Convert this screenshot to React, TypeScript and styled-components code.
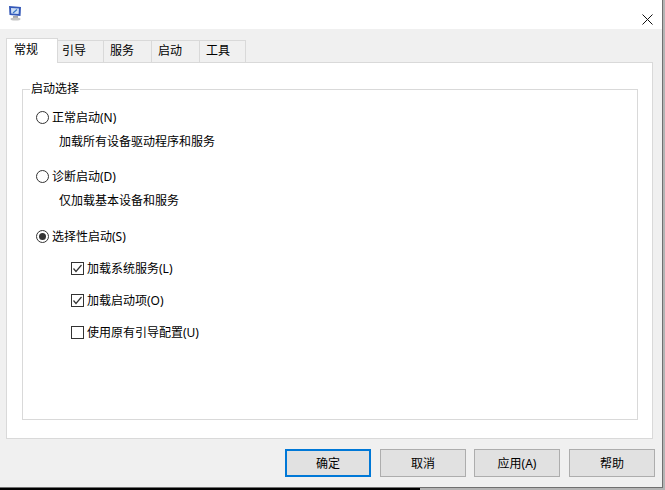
import React from 'react';
import styled, { createGlobalStyle } from 'styled-components';

const GlobalStyle = createGlobalStyle`
  html, body {
    margin: 0;
    padding: 0;
    background: #000;
  }
  body {
    width: 665px;
    height: 490px;
    overflow: hidden;
    font-family: "Noto Sans", "Noto Sans CJK SC", sans-serif;
  }
`;

const Screen = styled.div`
  width: 665px;
  height: 490px;
  background: linear-gradient(to right, #000 420px, #b4b4b4 420px);
  overflow: hidden;
`;

const Win = styled.div`
  width: 663px;
  height: 488px;
  background: #f0f0f0;
  border-right: 1px solid #707070;
  border-bottom: 1px solid #707070;
  display: flex;
  flex-direction: column;
  box-sizing: border-box;
`;

const TitleBar = styled.div`
  box-sizing: border-box;
  height: 29px;
  flex: none;
  background: #fff;
  display: flex;
  align-items: flex-start;
  justify-content: space-between;
  padding: 5px 9px 0 8px;
`;

const CloseWrap = styled.div`
  margin-top: 3px;
`;

const Body = styled.div`
  flex: 1;
  padding: 9px 0 0 6px;
  display: flex;
  flex-direction: column;
`;

const TabRow = styled.div`
  display: flex;
  height: 24px;
  flex: none;
  align-items: flex-end;
`;

const ActiveTab = styled.div`
  box-sizing: border-box;
  width: 52px;
  height: 25px;
  margin-bottom: -1px;
  padding-left: 7px;
  background: #fff;
  border: 1px solid #d9d9d9;
  border-bottom: none;
  font-size: 12px;
  line-height: 22px;
  color: #000;
  position: relative;
  z-index: 1;
`;

const Tab = styled.div<{ $width: number; $pad: number }>`
  box-sizing: border-box;
  width: ${p => p.$width}px;
  height: 22px;
  padding-left: ${p => p.$pad}px;
  background: #f0f0f0;
  border-top: 1px solid #d9d9d9;
  border-right: 1px solid #d9d9d9;
  font-size: 12px;
  line-height: 19px;
  color: #000;
`;

const Sheet = styled.div`
  box-sizing: border-box;
  width: 647px;
  height: 377px;
  background: #fff;
  border: 1px solid #d9d9d9;
  padding: 17px 14px 0 15px;
`;

const Group = styled.fieldset`
  box-sizing: border-box;
  margin: 0;
  width: 100%;
  height: 340px;
  border: 1px solid #d9d9d9;
  padding: 0 0 0 13px;
  display: flex;
  flex-direction: column;
`;

const Legend = styled.legend`
  font-size: 12px;
  line-height: 18px;
  color: #000;
  padding: 0 1px;
  margin-left: -6px;
`;

const OptionRow = styled.div`
  display: flex;
  align-items: center;
  gap: 3px;
  height: 20px;
  font-size: 12px;
  color: #000;
`;

const FirstRow = styled(OptionRow)`
  margin-top: 9px;
`;

const Hint = styled.div<{ $after: number }>`
  font-size: 12px;
  color: #000;
  line-height: 20px;
  margin: 5px 0 ${p => p.$after}px 23px;
`;

const Checks = styled.div`
  display: flex;
  flex-direction: column;
  gap: 12px;
  margin: 12px 0 0 35px;
`;

const Footer = styled.div`
  display: flex;
  padding: 10px 0 0 279px;
`;

const Button = styled.button<{ $primary?: boolean; $gap?: number }>`
  box-sizing: border-box;
  width: 86px;
  height: 28px;
  margin: 0 ${p => p.$gap ?? 0}px 0 0;
  padding: 0;
  background: #e1e1e1;
  border: ${p => (p.$primary ? '2px solid #0078d7' : '1px solid #adadad')};
  font-family: inherit;
  font-size: 12px;
  color: #000;
`;

const Radio = ({ checked }: { checked?: boolean }) => (
  <svg width="13" height="13" viewBox="0 0 13 13">
    <circle cx="6.5" cy="6.5" r="6" fill="#fff" stroke="#333" />
    {checked && <circle cx="6.5" cy="6.5" r="3.5" fill="#333" />}
  </svg>
);

const Check = ({ checked }: { checked?: boolean }) => (
  <svg width="13" height="13" viewBox="0 0 13 13">
    <rect x="0.5" y="0.5" width="12" height="12" fill="#fff" stroke="#333" />
    {checked && <path d="M2.5 6.5 L5 9.5 L10.5 3" fill="none" stroke="#333" strokeWidth="1.2" />}
  </svg>
);

const AppIcon = () => (
  <svg width="14" height="16" viewBox="0 0 14 16">
    <path d="M1 1 L13 2 L12.5 11 L1.5 10 Z" fill="#3458b8" />
    <path d="M3 3 L11 3.6 L10.6 9 L3.2 8.4 Z" fill="#cfe0f5" />
    <path d="M5 8 L9 4.5" stroke="#3a78c8" strokeWidth="1.2" />
    <rect x="5" y="11" width="5" height="2" fill="#a8a8a8" />
    <ellipse cx="7.5" cy="14" rx="5" ry="1.5" fill="#c4c4c4" />
  </svg>
);

const CloseIcon = () => (
  <svg width="11" height="11" viewBox="0 0 11 11">
    <path d="M0.5 0.5 L10.5 10.5 M10.5 0.5 L0.5 10.5" stroke="#111" strokeWidth="1" />
  </svg>
);

const tabs = [
  { label: '引导', width: 46, pad: 4 },
  { label: '服务', width: 48, pad: 6 },
  { label: '启动', width: 48, pad: 6 },
  { label: '工具', width: 46, pad: 6 },
];

export default function App() {
  return (
    <Screen>
      <GlobalStyle />
      <Win>
        <TitleBar>
          <AppIcon />
          <CloseWrap>
            <CloseIcon />
          </CloseWrap>
        </TitleBar>
        <Body>
          <TabRow>
            <ActiveTab>常规</ActiveTab>
            {tabs.map(t => (
              <Tab key={t.label} $width={t.width} $pad={t.pad}>
                {t.label}
              </Tab>
            ))}
          </TabRow>
          <Sheet>
            <Group>
              <Legend>启动选择</Legend>
              <FirstRow>
                <Radio />
                正常启动(N)
              </FirstRow>
              <Hint $after={14}>加载所有设备驱动程序和服务</Hint>
              <OptionRow>
                <Radio />
                诊断启动(D)
              </OptionRow>
              <Hint $after={15}>仅加载基本设备和服务</Hint>
              <OptionRow>
                <Radio checked />
                选择性启动(S)
              </OptionRow>
              <Checks>
                <OptionRow>
                  <Check checked />
                  加载系统服务(L)
                </OptionRow>
                <OptionRow>
                  <Check checked />
                  加载启动项(O)
                </OptionRow>
                <OptionRow>
                  <Check />
                  使用原有引导配置(U)
                </OptionRow>
              </Checks>
            </Group>
          </Sheet>
          <Footer>
            <Button $primary $gap={9}>确定</Button>
            <Button $gap={8}>取消</Button>
            <Button $gap={9}>应用(A)</Button>
            <Button>帮助</Button>
          </Footer>
        </Body>
      </Win>
    </Screen>
  );
}
